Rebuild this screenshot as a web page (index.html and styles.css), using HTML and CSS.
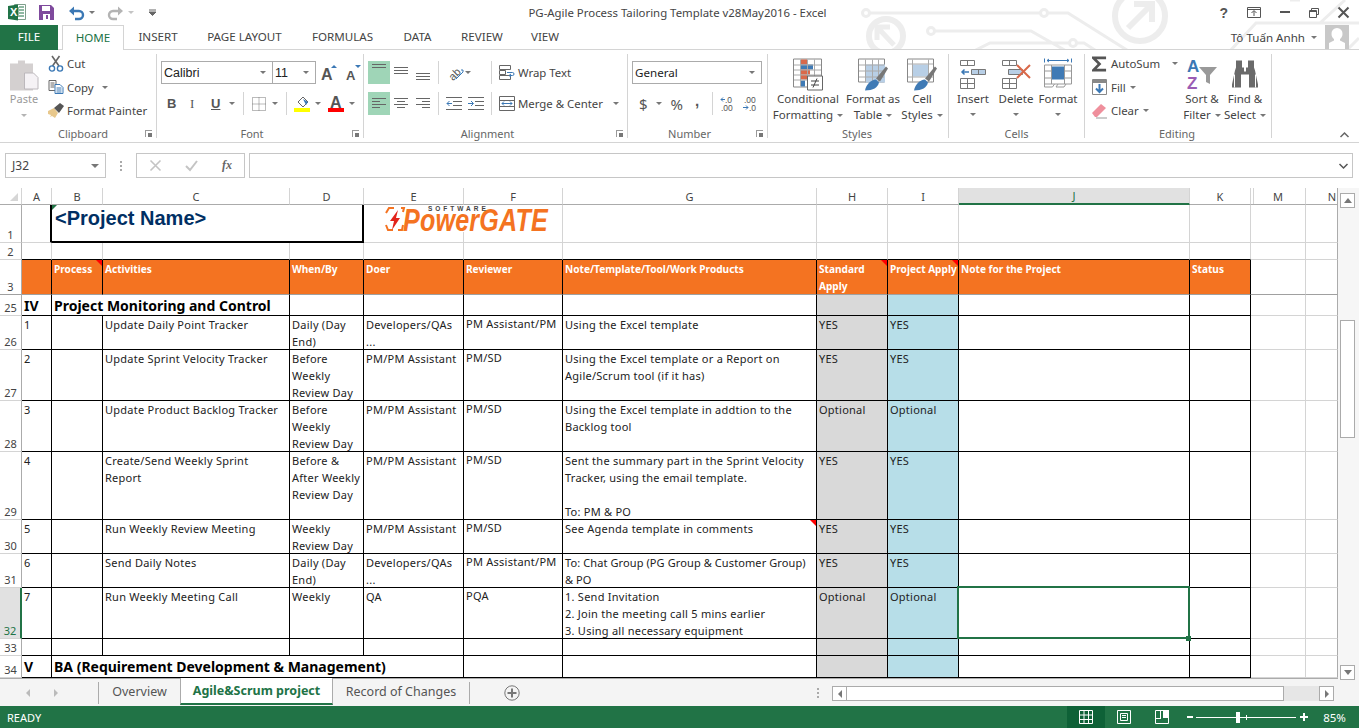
FILE: index.html
```html
<!DOCTYPE html>
<html lang="en">
<head>
<meta charset="utf-8">
<title>PG-Agile Process Tailoring Template v28May2016 - Excel</title>
<link rel="stylesheet" href="styles.css">
</head>
<body>
<div class="app">
<header class="head">
  <svg class="watermark" width="519" height="50" viewBox="0 0 519 50" fill="none" stroke="#ededed" stroke-width="3">
    <circle cx="26" cy="13" r="3.5"/><path d="M30 13H200"/><circle cx="204" cy="13" r="3.5"/><path d="M208 13H228L290 52"/>
    <circle cx="300" cy="16" r="25" stroke-width="6"/><path d="M288 28L311 5M294 4H312V22" stroke-width="6"/>
    <circle cx="46" cy="36" r="17" stroke-width="6"/><path d="M54 45L38 28M37 40V27H50" stroke-width="5"/>
    <circle cx="91" cy="31" r="3.5"/><path d="M95 31H191L228 52M132 52L150 43H229"/><circle cx="233" cy="43" r="3.5"/><path d="M237 43H244L258 52"/>
    <path d="M389 52L416 23H519M480 23L505 0M505 52L519 38M450 0L460 0"/>
  </svg>
  <div class="title-row">
    <div class="qat">
      <svg width="18" height="17" viewBox="0 0 18 17"><path fill="#fff" stroke="#7f9f8c" d="M6.5.5h11v15h-11z"/><path stroke="#217346" d="M11 3h5M11 6h5M11 9h5M11 12h5M10 3v10" fill="none"/><path fill="#217346" d="M0 2l10-1.500v16L0 15z"/><text x="2" y="12" class="xl">X</text></svg>
      <svg class="m12" width="15" height="15" viewBox="0 0 15 15"><path fill="#7f4a9d" d="M0 0h12l3 3v12H0z"/><path fill="#fff" d="M3 1h8v5H3zM4 9h7v6H4z"/><path fill="#7f4a9d" d="M7 10h2v4H7z"/></svg>
      <svg class="m14" width="15" height="14" viewBox="0 0 15 14" fill="none"><path d="M3 5h7a4 4 0 0 1 0 8H6" stroke="#3b78b5" stroke-width="2.400"/><path d="M0 5l5-4.500v9z" fill="#3b78b5"/></svg>
      <i class="caret m5"></i>
      <svg class="m13" width="15" height="14" viewBox="0 0 15 14" fill="none"><path d="M12 5H5a4 4 0 0 0 0 8h4" stroke="#b4b4b4" stroke-width="2.400"/><path d="M15 5l-5-4.500v9z" fill="#b4b4b4"/></svg>
      <i class="caret m5 caret-off"></i>
      <svg class="m15" width="7" height="7" viewBox="0 0 7 7"><path d="M0 1h7M0 3h7l-3.500 3.500z" stroke="#666" stroke-width="1" fill="#666"/></svg>
    </div>
    <div class="doc-title">PG-Agile Process Tailoring Template v28May2016 - Excel</div>
    <div class="win">
      <span class="help">?</span>
      <svg width="14" height="11" viewBox="0 0 14 11" fill="none" stroke="#555"><path d="M.5.500h13v10H.5zM1 2.500h12M7 9V4M4.500 6L7 3.500 9.500 6"/></svg>
      <svg width="10" height="3" viewBox="0 0 10 3"><path d="M0 1h10" stroke="#555" stroke-width="2"/></svg>
      <svg width="10" height="10" viewBox="0 0 10 10" fill="none" stroke="#555"><path d="M2.500 2.500V.5h7v6H7.500M.5 2.500h7v7h-7zM.5 3.500h7" /></svg>
      <svg width="11" height="11" viewBox="0 0 11 11" fill="none" stroke="#555" stroke-width="2"><path d="M.5.500l10 10M10.500.500l-10 10"/></svg>
    </div>
  </div>
  <nav class="tab-row">
    <a class="file">FILE</a>
    <a class="tab on">HOME</a>
    <a class="tab t-ins">INSERT</a>
    <a class="tab t-pl">PAGE LAYOUT</a>
    <a class="tab t-fo">FORMULAS</a>
    <a class="tab t-da">DATA</a>
    <a class="tab t-re">REVIEW</a>
    <a class="tab t-vi">VIEW</a>
    <div class="user">
      <span>Tô Tuấn Anhh</span><i class="caret"></i>
      <svg class="avatar" width="24" height="24" viewBox="0 0 24 24"><path fill="#c8c8c8" d="M0 0h24v24H0z"/><path fill="#fff" d="M12 3a5.500 5.500 0 0 1 5.500 6c0 2.500-1.200 4-2.500 5v1.500l5 2.500v6H4v-6l5-2.500V14c-1.300-1-2.500-2.500-2.500-5A5.500 5.500 0 0 1 12 3z"/></svg>
    </div>
  </nav>
</header>

<section class="ribbon">
  <div class="group g-clip">
    <div class="body row">
      <div class="big paste">
        <svg class="big-ic" width="30" height="32" viewBox="0 0 30 32"><path fill="#d4d0d0" d="M1 5h8V2h7v3h8v27H1z"/><path fill="#f5f2f5" stroke="#bcb8bc" d="M15.500 14.500h9l4.500 4.500v11.500H15.500z"/></svg>
        <span class="off">Paste</span>
        <i class="caret off-c"></i>
      </div>
      <div class="small-col">
        <div class="small"><svg class="sic" width="15" height="16" viewBox="0 0 15 16" fill="none"><path d="M3.500 0l7 10M11 0L4 10" stroke="#666" stroke-width="1.600"/><circle cx="3.500" cy="12.500" r="2.600" stroke="#3b78b5" stroke-width="1.400"/><circle cx="11.500" cy="12.500" r="2.600" stroke="#3b78b5" stroke-width="1.400"/></svg><span>Cut</span></div>
        <div class="small"><svg class="sic" width="15" height="14" viewBox="0 0 15 14" fill="#fff" stroke="#666"><path d="M.5.500h7v10h-7zM2 3h4M2 5h4M2 7h4"/><path stroke="#3b78b5" d="M6.500 4.500h5l3 3v6h-8zM8 8h5M8 10h5M8 12h5"/></svg><span>Copy</span><i class="caret ml8"></i></div>
        <div class="small"><svg class="sic" width="16" height="15" viewBox="0 0 16 15"><path fill="#e8c88c" d="M0 8l6-3 4 5-3 5-3-2-2 1 1-2-3-1z"/><path fill="#555" d="M6 5l6-5 4 3-5 7z"/></svg><span>Format Painter</span></div>
      </div>
    </div>
    <div class="label">Clipboard<i class="launch"></i></div>
  </div>

  <div class="group g-font">
    <div class="body col">
      <div class="r1">
        <div class="select font-sel"><span class="calibri">Calibri</span><i class="caret"></i></div>
        <div class="select size-sel"><span class="calibri">11</span><i class="caret"></i></div>
        <svg class="ml5" width="16" height="16" viewBox="0 0 16 16"><text x="0" y="15" class="glyph-a big-a">A</text><path d="M10 3l3-3 3 3z" fill="#3b78b5"/></svg>
        <svg class="ml8" width="16" height="16" viewBox="0 0 16 16"><text x="1" y="15" class="glyph-a">A</text><path d="M10 0h6l-3 3z" fill="#3b78b5"/></svg>
      </div>
      <div class="r2">
        <b class="fmt ml6">B</b><em class="fmt ml13">I</em><u class="fmt ml11">U</u><i class="caret ml8"></i>
        <i class="vsep ml8"></i>
        <svg class="ml8" width="14" height="14" viewBox="0 0 14 14" fill="none" stroke="#777" stroke-dasharray="1 1"><path d="M.5.500h13v13H.5zM.5 7h13M7 .5v13"/></svg>
        <i class="caret ml6"></i>
        <i class="vsep ml8"></i>
        <svg class="ml7" width="17" height="17" viewBox="0 0 17 17"><path d="M4 7l5-5 5 5-5 5z" fill="#fff" stroke="#666"/><path d="M9 4l5 3-2 3z" fill="#3b78b5"/><path d="M0 13h16v4H0z" fill="#ffff00"/></svg>
        <i class="caret ml4"></i>
        <svg class="ml7" width="17" height="17" viewBox="0 0 17 17"><text x="2" y="13" class="glyph-a big-a">A</text><path d="M0 13h16v4H0z" fill="#ff0000"/></svg>
        <i class="caret ml4"></i>
      </div>
    </div>
    <div class="label">Font<i class="launch"></i></div>
  </div>

  <div class="group g-align">
    <div class="body col">
      <div class="r1">
        <svg class="al on" width="22" height="23" viewBox="0 0 22 23" stroke="#666"><path d="M4 3.500h14M4 6.500h14"/></svg>
        <svg class="al" width="22" height="23" viewBox="0 0 22 23" stroke="#666"><path d="M4 6.500h14M4 9.500h14M4 12.500h14"/></svg>
        <svg class="al" width="22" height="23" viewBox="0 0 22 23" stroke="#666"><path d="M4 12.500h14M4 15.500h14M4 18.500h14"/></svg>
        <i class="vsep ml4"></i>
        <svg class="ml8" width="17" height="17" viewBox="0 0 17 17"><text x="0" y="13" class="ori" transform="rotate(-45 8 8)">ab</text><path d="M9 15L16 8M14 6h2v2" stroke="#3b78b5" fill="none"/></svg>
        <i class="caret ml1"></i>
        <i class="vsep ml20"></i>
        <div class="small wrapbtn"><svg class="sic2" width="16" height="15" viewBox="0 0 16 15" fill="none" stroke="#666"><path d="M.5.500h11v4H.5zM.5 5.500h6v4h-6zM.5 10.500h11v4H.5z"/><path d="M8 7.500h5.500a1.500 1.500 0 0 1 0 3H11M12 9l-2 1.500 2 1.500" stroke="#3b78b5"/></svg><span>Wrap Text</span></div>
      </div>
      <div class="r2">
        <svg class="al on" width="22" height="23" viewBox="0 0 22 23" stroke="#666"><path d="M4 6.500h14M4 9.500h8M4 12.500h14M4 15.500h8"/></svg>
        <svg class="al" width="22" height="23" viewBox="0 0 22 23" stroke="#666"><path d="M4 6.500h14M7 9.500h8M4 12.500h14M7 15.500h8"/></svg>
        <svg class="al" width="22" height="23" viewBox="0 0 22 23" stroke="#666"><path d="M4 6.500h14M10 9.500h8M4 12.500h14M10 15.500h8"/></svg>
        <i class="vsep ml4"></i>
        <svg class="ml7" width="16" height="13" viewBox="0 0 16 13" stroke="#666"><path d="M0 .5h16M7 4.500h9M7 8.500h9M0 12.500h16"/><path d="M6 6.500H1M3.500 4L1 6.500 3.500 9" stroke="#3b78b5" fill="none"/></svg>
        <svg class="ml6" width="16" height="13" viewBox="0 0 16 13" stroke="#666"><path d="M0 .5h16M7 4.500h9M7 8.500h9M0 12.500h16"/><path d="M0 6.500h5M3 4l2.500 2.500L3 9" stroke="#3b78b5" fill="none"/></svg>
        <i class="vsep ml7"></i>
        <div class="small wrapbtn"><svg class="sic2" width="16" height="15" viewBox="0 0 16 15" fill="none" stroke="#666"><path d="M.5.500h15v14H.5zM.5 4.500h15M.5 10.500h15"/><path d="M3 7.500h10M5 5.500l-2 2 2 2M11 5.500l2 2-2 2" stroke="#3b78b5"/></svg><span>Merge &amp; Center</span><i class="caret ml10"></i></div>
      </div>
    </div>
    <div class="label">Alignment<i class="launch"></i></div>
  </div>

  <div class="group g-num">
    <div class="body col">
      <div class="r1"><div class="select num-sel"><span>General</span><i class="caret"></i></div></div>
      <div class="r2">
        <span class="dollar">$</span><i class="caret ml8"></i><span class="pct">%</span><span class="comma">,</span>
        <i class="vsep ml13"></i>
        <svg class="ml7" width="15" height="15" viewBox="0 0 15 15"><text x="5" y="7" class="dec">.0</text><text x="1" y="15" class="dec">.00</text><path d="M5 3.500H1M3 1.500l-2 2 2 2" stroke="#3b78b5" fill="none"/></svg>
        <svg class="ml7" width="15" height="15" viewBox="0 0 15 15"><text x="2" y="7" class="dec">.00</text><text x="7" y="15" class="dec">.0</text><path d="M1 11.500h5M4 9.500l2 2-2 2" stroke="#3b78b5" fill="none"/></svg>
      </div>
    </div>
    <div class="label">Number<i class="launch"></i></div>
  </div>

  <div class="group g-styles">
    <div class="body row">
      <div class="big w72">
        <svg class="big-ic" width="30" height="32" viewBox="0 0 30 32"><path fill="#fff" stroke="#888" d="M.5.500h28v28H.5z"/><path fill="#d9694a" d="M8 1h6v5H8zM8 16h6v5H8z"/><path fill="#3f7ab5" d="M8 6h12v5H8zM8 22h4v6H8z"/><path fill="#d9694a" d="M8 11h9v5H8z"/><path stroke="#aaa" fill="none" d="M7.500 1v27M14.500 1v27M21.500 1v27M1 6.500h27M1 11.500h27M1 16.500h27M1 21.500h27"/><path fill="#fff" stroke="#666" d="M14.500 17.500h15v14h-15z"/><path stroke="#444" fill="none" d="M18 22.500h8M18 26.500h8M20 29l4-9"/></svg>
        <span>Conditional</span><span>Formatting<i class="caret ml4 mid"></i></span>
      </div>
      <div class="big w58">
        <svg class="big-ic" width="30" height="32" viewBox="0 0 30 32"><path fill="#fff" stroke="#888" d="M.5.500h26v23H.5z"/><path fill="#b8cfe6" d="M7 6h20v18H7z"/><path stroke="#aaa" fill="none" d="M7.500 1v23M14.500 1v23M20.500 1v23M1 6.500h25M1 12.500h25M1 18.500h25"/><path fill="#777" d="M18 20L28 8l2 2-8 13z"/><path fill="#3f7ab5" d="M7 32c1-6 6-11 11-11l3 3c-1 5-6 8-14 8z"/></svg>
        <span>Format as</span><span>Table<i class="caret ml4 mid"></i></span>
      </div>
      <div class="big w40">
        <svg class="big-ic" width="30" height="32" viewBox="0 0 30 32"><path fill="#fff" stroke="#888" d="M.5.500h26v23H.5z"/><path fill="#b8cfe6" d="M6 6h15v12H6z"/><path stroke="#aaa" fill="none" d="M5.500 1v23M21.500 1v23M1 5.500h25M1 18.500h25"/><path fill="#777" d="M18 20L28 8l2 2-8 13z"/><path fill="#3f7ab5" d="M7 32c1-6 6-11 11-11l3 3c-1 5-6 8-14 8z"/></svg>
        <span>Cell</span><span>Styles<i class="caret ml4 mid"></i></span>
      </div>
    </div>
    <div class="label">Styles</div>
  </div>

  <div class="group g-cells">
    <div class="body row">
      <div class="big w48">
        <svg class="big-ic" width="28" height="29" viewBox="0 0 28 29" fill="none" stroke="#777"><path d="M1.500.500h14v5h-14zM8.500.500v5M1.500 18.500h14v10h-14zM8.500 18.500v10M1.500 23.500h14"/><path d="M12.500 9.500h14v5h-14zM19.500 9.500v5" fill="#b8cfe6"/><path d="M10 12H3M5.500 9.500L3 12l2.500 2.500" stroke="#3b78b5" stroke-width="1.500"/></svg>
        <span>Insert</span><i class="caret cc"></i>
      </div>
      <div class="big w38">
        <svg class="big-ic" width="30" height="29" viewBox="0 0 30 29" fill="none" stroke="#777"><path d="M1.500.500h14v5h-14zM8.500.500v5M1.500 18.500h14v10h-14zM8.500 18.500v10M1.500 23.500h14"/><path d="M7.500 9.500h14v5h-14z" fill="#b8cfe6"/><path d="M16 5l13 13M29 5L16 18" stroke="#d9694a" stroke-width="2"/></svg>
        <span>Delete</span><i class="caret cc"></i>
      </div>
      <div class="big w46">
        <svg class="big-ic" width="28" height="32" viewBox="0 0 28 32" fill="none" stroke="#999"><path d="M.5 6.500h27v19H.5zM7.500 6.500v19M20.500 6.500v19M.5 12.500h27M.5 19.500h27"/><path d="M8 7h12v13H8z" fill="#3f7ab5" stroke="none" transform="translate(0 1)"/><path d="M.5 0v4M27.500 0v4M3 2h22M5 .5L3 2l2 1.500M23 .5L25 2l-2 1.500" stroke="#3b78b5"/><path d="M.5 25.500v3h8l2-3M14 25.500l-2 3h8l2-3"/></svg>
        <span>Format</span><i class="caret cc"></i>
      </div>
    </div>
    <div class="label">Cells</div>
  </div>

  <div class="group g-edit">
    <div class="body row">
      <div class="small-col edit-col">
        <div class="small"><svg class="sic3" width="16" height="16" viewBox="0 0 16 16"><path fill="#555" d="M0 0h15v3H5l5 5-5 5h10v3H0v-2l6-6-6-6z"/></svg><span>AutoSum</span><i class="caret ml12"></i></div>
        <div class="small"><svg class="sic3" width="15" height="16" viewBox="0 0 15 16" fill="none"><path d="M.5.500h14v15H.5z" stroke="#888" fill="#fff"/><path d="M1 1h13v3H1z" fill="#888"/><path d="M7.500 5v8M4 9.500l3.500 3.500L11 9.500" stroke="#3b78b5" stroke-width="2"/></svg><span>Fill</span><i class="caret ml4 mid"></i></div>
        <div class="small"><svg class="sic3" width="15" height="15" viewBox="0 0 15 15"><path d="M0 10l9-9 5 4-9 9H3z" fill="#ef8f9c"/><path d="M4 15h11" stroke="#999"/></svg><span>Clear</span><i class="caret ml4 mid"></i></div>
      </div>
      <div class="big w44">
        <svg class="big-ic" width="32" height="31" viewBox="0 0 32 31"><text x="1" y="13" class="az blue">A</text><text x="1" y="30" class="az purple">Z</text><path d="M13 8h18l-7 8v9l-4-2v-7z" fill="#999"/></svg>
        <span>Sort &amp;</span><span>Filter<i class="caret ml4 mid"></i></span>
      </div>
      <div class="big w42">
        <svg class="big-ic" width="26" height="28" viewBox="0 0 26 28"><path fill="#6a6a6a" d="M4 0h6v7h2v4h2V7h2V0h6v7l1 3 3 14v3h-9V14h-8v13H0v-3L3 10l1-3z"/><path stroke="#fff" d="M2.500 14v13M23.500 14v13"/></svg>
        <span>Find &amp;</span><span>Select<i class="caret ml4 mid"></i></span>
      </div>
    </div>
    <div class="label">Editing</div>
  </div>
  <svg class="collapse" width="9" height="6" viewBox="0 0 9 6" fill="none" stroke="#666" stroke-width="1.500"><path d="M.5 5l4-4 4 4"/></svg>
</section>

<section class="formula">
  <div class="namebox"><span>J32</span><i class="caret dark"></i></div>
  <div class="dots"><i></i><i></i><i></i></div>
  <div class="fbtns">
    <svg width="11" height="11" viewBox="0 0 11 11" stroke="#c4c4c4" stroke-width="1.600"><path d="M.5.500l10 10M10.500.500l-10 10"/></svg>
    <svg width="13" height="11" viewBox="0 0 13 11" fill="none" stroke="#c4c4c4" stroke-width="2"><path d="M1 6l4 4 7-9"/></svg>
    <span class="fx">fx</span>
  </div>
  <div class="finput"><svg width="9" height="6" viewBox="0 0 9 6" fill="none" stroke="#555" stroke-width="1.500"><path d="M.5 1l4 4 4-4"/></svg></div>
</section>

<section class="sheet">
  <table class="grid">
    <colgroup><col class="w-rh"><col class="w-a"><col class="w-b"><col class="w-c"><col class="w-d"><col class="w-e"><col class="w-f"><col class="w-g"><col class="w-h"><col class="w-i"><col class="w-j"><col class="w-k"><col class="w-m"><col class="w-n"></colgroup>
    <thead>
      <tr class="hh"><th class="corner"></th><th>A</th><th>B</th><th>C</th><th>D</th><th>E</th><th>F</th><th>G</th><th>H</th><th>I</th><th class="sel">J</th><th>K</th><th class="after-hidden">M</th><th class="clip-n">N</th></tr>
    </thead>
    <tbody>
      <tr class="h38 plain"><td class="rn">1</td><td class="box-left"></td><td colspan="3" class="pname"><i class="note-green"></i>&lt;Project Name&gt;</td><td class="logo">
        <svg width="165" height="27" viewBox="0 0 165 27"><path d="M9 3H4L1 8M1 20l2 5h5M16 3h3l-1 4M18 20l-1 5h-4" fill="none" stroke="#f47321" stroke-width="2"/><path d="M13 5L5 16h4l-2 9 8-12h-4z" fill="#e2231a"/><text x="18" y="26" class="pg" textLength="145" lengthAdjust="spacingAndGlyphs">PowerGATE</text><text x="43" y="6" class="sw" textLength="58">SOFTWARE</text></svg>
      </td><td></td><td></td><td></td><td></td><td></td><td></td><td></td><td></td></tr>
      <tr class="h17 plain blk-b"><td class="rn">2</td><td></td><td></td><td></td><td></td><td></td><td></td><td></td><td></td><td></td><td></td><td></td><td class="free"></td><td class="free"></td></tr>
      <tr class="h35 hdr"><td class="rn">3</td><td></td><td><i class="note"></i>Process</td><td>Activities</td><td>When/By</td><td>Doer</td><td>Reviewer</td><td>Note/Template/Tool/Work Products</td><td><i class="note"></i>Standard<br>Apply</td><td><i class="note"></i>Project Apply</td><td>Note for the Project</td><td>Status</td><td class="free"></td><td class="free"></td></tr>
      <tr class="h21 sect"><td class="rn">25</td><td>IV</td><td colspan="2">Project Monitoring and Control</td><td></td><td></td><td></td><td></td><td class="gray"></td><td class="blue"></td><td></td><td></td><td class="free"></td><td class="free"></td></tr>
      <tr class="h34"><td class="rn">26</td><td>1</td><td></td><td>Update Daily Point Tracker</td><td>Daily (Day<br>End)</td><td>Developers/QAs<br>...</td><td class="up">PM Assistant/PM</td><td>Using the Excel template</td><td class="gray">YES</td><td class="blue">YES</td><td></td><td></td><td class="free"></td><td class="free"></td></tr>
      <tr class="h51"><td class="rn">27</td><td>2</td><td></td><td>Update Sprint Velocity Tracker</td><td>Before<br>Weekly<br>Review Day</td><td>PM/PM Assistant</td><td class="up">PM/SD</td><td>Using the Excel template or a Report on<br>Agile/Scrum tool (if it has)</td><td class="gray">YES</td><td class="blue">YES</td><td></td><td></td><td class="free"></td><td class="free"></td></tr>
      <tr class="h51"><td class="rn">28</td><td>3</td><td></td><td>Update Product Backlog Tracker</td><td>Before<br>Weekly<br>Review Day</td><td>PM/PM Assistant</td><td class="up">PM/SD</td><td>Using the Excel template in addtion to the<br>Backlog tool</td><td class="gray">Optional</td><td class="blue">Optional</td><td></td><td></td><td class="free"></td><td class="free"></td></tr>
      <tr class="h68"><td class="rn">29</td><td>4</td><td></td><td>Create/Send Weekly Sprint<br>Report</td><td>Before &amp;<br>After Weekly<br>Review Day</td><td>PM/PM Assistant</td><td class="up">PM/SD</td><td>Sent the summary part in the Sprint Velocity<br>Tracker, using the email template.<br><br>To: PM &amp; PO</td><td class="gray">YES</td><td class="blue">YES</td><td></td><td></td><td class="free"></td><td class="free"></td></tr>
      <tr class="h34"><td class="rn">30</td><td>5</td><td></td><td>Run Weekly Review Meeting</td><td>Weekly<br>Review Day</td><td>PM/PM Assistant</td><td class="up">PM/SD</td><td><i class="note"></i>See Agenda template in comments</td><td class="gray">YES</td><td class="blue">YES</td><td></td><td></td><td class="free"></td><td class="free"></td></tr>
      <tr class="h34"><td class="rn">31</td><td>6</td><td></td><td>Send Daily Notes</td><td>Daily (Day<br>End)</td><td>Developers/QAs<br>...</td><td class="up">PM Assistant/PM</td><td class="tight">To: Chat Group (PG Group &amp; Customer Group)<br>&amp; PO</td><td class="gray">YES</td><td class="blue">YES</td><td></td><td></td><td class="free"></td><td class="free"></td></tr>
      <tr class="h51"><td class="rn rsel">32</td><td>7</td><td></td><td>Run Weekly Meeting Call</td><td>Weekly</td><td>QA</td><td class="up">PQA</td><td>1. Send Invitation<br>2. Join the meeting call 5 mins earlier<br>3. Using all necessary equipment</td><td class="gray">Optional</td><td class="blue">Optional</td><td class="active"><i class="selbox"></i><i class="handle"></i></td><td></td><td class="free"></td><td class="free"></td></tr>
      <tr class="h17"><td class="rn">33</td><td></td><td></td><td></td><td></td><td></td><td></td><td></td><td class="gray"></td><td class="blue"></td><td></td><td></td><td class="free"></td><td class="free"></td></tr>
      <tr class="h22 sect"><td class="rn">34</td><td>V</td><td colspan="4">BA (Requirement Development &amp; Management)</td><td></td><td></td><td class="gray"></td><td class="blue"></td><td></td><td></td><td class="free"></td><td class="free"></td></tr>
    </tbody>
  </table>
  <aside class="vscroll">
    <div class="sbtn"><i class="tri-up"></i></div>
    <div class="vtrack"><div class="vthumb"></div></div>
    <div class="sbtn"><i class="tri-down"></i></div>
  </aside>
</section>

<section class="sheetbar">
  <div class="nav-arrows"><i class="tri-l"></i><i class="tri-r"></i></div>
  <div class="sheets">
    <a class="sheet-tab w-ov">Overview</a>
    <a class="sheet-tab on">Agile&amp;Scrum project</a>
    <a class="sheet-tab w-rc">Record of Changes</a>
  </div>
  <svg class="plus" width="16" height="16" viewBox="0 0 16 16" fill="none" stroke="#777"><circle cx="8" cy="8" r="7.200"/><path d="M8 3.500v9M3.500 8h9" stroke-width="2"/></svg>
  <div class="dots sb-dots"><i></i><i></i><i></i></div>
  <div class="hscroll">
    <div class="hbtn"><i class="tri-l dk"></i></div>
    <div class="hthumb"></div>
    <div class="htrack"></div>
    <div class="hbtn"><i class="tri-r dk"></i></div>
  </div>
</section>

<footer class="status">
  <span>READY</span>
  <div class="views">
    <div class="view on"><svg width="14" height="14" viewBox="0 0 14 14" fill="none" stroke="#fff"><path d="M.5.500h13v13H.5zM.5 5h13M.5 9.500h13M5 .5v13M9.500.5v13"/></svg></div>
    <div class="view"><svg width="14" height="14" viewBox="0 0 14 14" fill="none" stroke="#fff"><path d="M.5.500h13v13H.5zM3.500 3.500h7v7h-7zM5 5.500h4M5 7.500h4"/></svg></div>
    <div class="view"><svg width="14" height="14" viewBox="0 0 14 14"><path d="M.5.500h13v13H.5z" fill="none" stroke="#fff"/><path d="M0 8h5V0h1v9H0zM8 0h6v8H8z" fill="#fff"/></svg></div>
  </div>
  <div class="zoom">
    <i class="zm"></i>
    <div class="slider"><i class="knob"></i><i class="tick"></i></div>
    <i class="zp"></i>
  </div>
  <span class="pct-zoom">85%</span>
</footer>
</div>
</body>
</html>
```
FILE: styles.css
```css
* { box-sizing: border-box; }
html, body { margin: 0; padding: 0; background: #fff; }
body { font: 12px "Noto Sans", "Open Sans", sans-serif; color: #444; }
.app { width: 1359px; height: 728px; overflow: hidden; display: flex; flex-direction: column; }
i { display: block; flex: none; }
svg { flex: none; display: block; overflow: visible; }

/* head */
.head { position: relative; height: 50px; }
.watermark { position: absolute; left: 840px; top: 0; overflow: hidden; }
.title-row { position: relative; height: 25px; display: grid; grid-template-columns: 1fr auto 1fr; align-items: center; }
.qat { display: flex; align-items: center; padding-left: 8px; }
.xl { font: bold 11px "Liberation Sans", sans-serif; fill: #fff; }
.m12 { margin-left: 13px; }
.m14 { margin-left: 15px; }
.m13 { margin-left: 13px; }
.m15 { margin-left: 15px; }
.m5 { margin-left: 5px; }
.doc-title { font-size: 11.400px; color: #444; padding-right: 4px; }
.win { display: flex; align-items: center; justify-content: flex-end; gap: 19px; padding-right: 10px; }
.help { font: bold 14px "Liberation Sans", sans-serif; color: #555; margin-right: 0; }
.tab-row { position: relative; height: 25px; display: flex; align-items: stretch; border-bottom: 1px solid #d4d4d4; }
.file { width: 58px; height: 25px; background: #217346; color: #fff; display: flex; align-items: center; justify-content: center; font-size: 11.600px; margin-right: 4px; padding-bottom: 2px; }
.tab { display: flex; align-items: center; justify-content: center; font-size: 11.600px; color: #444; height: 25px; padding-bottom: 2px; }
.t-ins { width: 68px; } .t-pl { width: 105px; } .t-fo { width: 91px; } .t-da { width: 59px; } .t-re { width: 70px; } .t-vi { width: 56px; }
.tab.on { width: 62px; color: #217346; background: #fff; border: 1px solid #d4d4d4; border-bottom: 0; }
.user { margin-left: auto; display: flex; align-items: center; padding-right: 10px; color: #444; gap: 6px; font-size: 11.600px; height: 24px; }
.user .caret { margin-right: 1px; }
.avatar { margin-left: 1px; }

/* carets */
.caret { width: 0; height: 0; border: 3px solid transparent; border-top: 3px solid #777; border-bottom: 0; }
.caret-off { border-top-color: #c4c4c4; }
.caret.dark { border-width: 4px; border-bottom: 0; border-top-color: #777; }
.off-c { border-top-color: #b4b4b4; margin-top: 7px; }
.caret.cc { margin-top: 6px; }
.caret.mid { display: inline-block; vertical-align: middle; }

/* ribbon */
.ribbon { position: relative; height: 93px; padding-top: 4px; display: flex; border-bottom: 1px solid #d4d4d4; }
.group { height: 84px; border-right: 1px solid #d4d4d4; display: flex; flex-direction: column; position: relative; }
.body { height: 72px; }
.row { display: flex; }
.col { display: flex; flex-direction: column; }
.label { position: relative; height: 12px; line-height: 16px; text-align: center; font-size: 11px; color: #666; }
.launch { position: absolute; right: 4px; top: 4px; width: 7px; height: 7px; border-left: 1px solid #999; border-top: 1px solid #999; }
.launch::after { content: ""; position: absolute; right: 0; bottom: 0; width: 4px; height: 4px; background: #777; }
.g-clip { width: 157px; }
.g-font { width: 207px; padding-left: 4px; }
.g-align { width: 264px; padding-left: 4px; }
.g-num { width: 140px; padding-left: 4px; }
.g-styles { width: 181px; padding-left: 4px; }
.g-cells { width: 136px; }
.g-edit { width: 187px; padding-left: 7px; }
.g-clip .label { padding-left: 10px; }
.g-font .label, .g-align .label, .g-num .label { margin-left: -4px; padding-right: 16px; }
.g-styles .label { margin-left: -4px; padding-right: 2px; }
.g-edit .label { margin-left: -7px; padding-right: 2px; }
.big { display: flex; flex-direction: column; align-items: center; line-height: 16px; font-size: 11.500px; color: #444; white-space: nowrap; }
.big-ic { height: 33px; margin-top: 4px; margin-bottom: 0; }
.paste { width: 48px; }
.off { color: #9a9a9a; font-size: 11px; }
.w72 { width: 72px; } .w58 { width: 58px; } .w40 { width: 40px; } .w48 { width: 48px; } .w38 { width: 38px; } .w46 { width: 46px; } .w44 { width: 44px; } .w42 { width: 42px; }
.small-col { display: flex; flex-direction: column; margin-top: -2px; }
.small { display: flex; align-items: center; height: 23.500px; font-size: 11.400px; color: #444; white-space: nowrap; }
.sic { width: 16px; margin-right: 3px; }
.sic2 { margin-right: 3px; }
.sic3 { margin-right: 4px; width: 15px; }
.edit-col { width: 88px; }
.r1 { display: flex; align-items: center; margin-top: 7px; height: 23px; }
.r2 { display: flex; align-items: center; margin-top: 8px; height: 23px; }
.select { height: 23px; border: 1px solid #ababab; display: flex; align-items: center; justify-content: space-between; padding: 0 6px 0 2px; background: #fff; color: #222; }
.font-sel { width: 111px; border-right: 0; }
.size-sel { width: 44px; }
.num-sel { width: 130px; font-size: 11.600px; }
.calibri { font: 12.500px "Liberation Sans", sans-serif; }
.glyph-a { font: bold 13px "Liberation Sans", sans-serif; fill: #555; }
.big-a { font-size: 16px; }
.fmt { font: 13px "Liberation Serif", serif; color: #555; width: 10px; }
b.fmt { font: bold 13px "Liberation Sans", sans-serif; }
u.fmt { font: bold 13px "Liberation Sans", sans-serif; }
.vsep { width: 1px; height: 23px; background: #d4d4d4; }
.ori { font: 11px "Liberation Sans", sans-serif; fill: #555; }
.al.on { background: #9fd5b7; }
.wrapbtn { margin-left: 7px; }
.ml1 { margin-left: 1px; }
.ml4 { margin-left: 4px; }
.ml5 { margin-left: 5px; }
.ml6 { margin-left: 6px; }
.ml7 { margin-left: 7px; }
.ml8 { margin-left: 8px; }
.ml10 { margin-left: 10px; }
.ml11 { margin-left: 11px; }
.ml12 { margin-left: 12px; }
.ml13 { margin-left: 13px; }
.ml20 { margin-left: 20px; }
.dollar { margin-left: 7px; font-size: 15px; color: #555; }
.pct { margin-left: 9px; font-size: 15px; color: #555; }
.comma { margin-left: 12px; font: bold 15px "Liberation Sans", sans-serif; color: #555; margin-top: -6px; }
.dec { font: 8.500px "Liberation Sans", sans-serif; fill: #555; }
.az { font: bold 17px "Liberation Sans", sans-serif; }
.az.blue { fill: #3b78b5; }
.az.purple { fill: #9a5cb4; }
.collapse { position: absolute; right: 10px; top: 82px; }

/* formula */
.formula { height: 45px; padding: 10px 6px 10px 5px; display: flex; align-items: stretch; }
.namebox { width: 101px; border: 1px solid #c6c6c6; display: flex; align-items: center; justify-content: space-between; padding: 0 6px; color: #444; font-size: 12px; }
.dots { width: 30px; display: flex; flex-direction: column; align-items: center; justify-content: center; gap: 2px; }
.dots i { width: 2px; height: 2px; background: #aaa; }
.fbtns { width: 109px; border: 1px solid #c6c6c6; display: flex; align-items: center; justify-content: space-between; padding: 0 12px 0 13px; }
.fx { font: italic bold 12px "Liberation Serif", serif; color: #666; }
.finput { flex: 1; margin-left: 4px; border: 1px solid #c6c6c6; display: flex; align-items: center; justify-content: flex-end; padding-right: 4px; }

/* sheet */
.sheet { position: relative; height: 490px; display: flex; }
.grid { table-layout: fixed; width: 1338px; height: 490px; border-collapse: separate; border-spacing: 0; font-family: "Noto Sans", sans-serif; font-size: 11px; color: #222; letter-spacing: .25px; }
.w-rh { width: 22px; } .w-a { width: 30px; } .w-b { width: 51px; } .w-c { width: 187px; } .w-d { width: 74px; } .w-e { width: 100px; } .w-f { width: 99px; } .w-g { width: 254px; } .w-h { width: 71px; } .w-i { width: 71px; } .w-j { width: 231px; } .w-k { width: 61px; } .w-m { width: 55px; } .w-n { width: 32px; }
.hh { height: 17px; }
.hh th { padding: 0; font: 11px "Noto Sans", sans-serif; color: #444; border-right: 1px solid #d4d4d4; border-bottom: 1px solid #ababab; overflow: hidden; letter-spacing: 0; }
.corner { position: relative; }
.corner::after { content: ""; position: absolute; right: 3px; bottom: 3px; border: 4px solid transparent; border-right-color: #d6d6d6; border-bottom-color: #d6d6d6; }
.hh .sel { background: #e1e1e1; border-bottom: 2px solid #217346; color: #217346; }
.hh .after-hidden { box-shadow: inset 2px 0 0 #fff, inset 3px 0 0 #d4d4d4; }
.hh .clip-n { text-align: right; padding-right: 1px; border-right: 1px solid #ababab; }
.h38 { height: 38px; } .h17 { height: 17px; } .h35 { height: 35px; } .h21 { height: 21px; } .h34 { height: 34px; } .h51 { height: 51px; } .h68 { height: 68px; } .h22 { height: 22px; }
td { padding: 0 0 0 2px; vertical-align: top; line-height: 17px; white-space: nowrap; border-right: 1px solid #000; border-bottom: 1px solid #000; overflow: hidden; position: relative; }
td:not(.rn)::after { content: ""; display: block; margin-top: -1px; }
td.rn { padding: 0; text-align: center; vertical-align: bottom; color: #444; border-right: 1px solid #ababab; border-bottom: 1px solid #d4d4d4; line-height: 15px; font-size: 11px; letter-spacing: 0; }
td.rsel { background: #e1e1e1; color: #217346; border-right: 2px solid #217346; }
td.tight { letter-spacing: .1px; }
.plain td { border-right: 1px solid #d4d4d4; border-bottom: 1px solid #d4d4d4; }
.plain td.rn { border-right: 1px solid #ababab; }
.plain td.box-left { border-right: 2px solid #000; }
.blk-b td { border-bottom: 1px solid #000; }
.blk-b td.rn, .blk-b td.free { border-bottom: 1px solid #d4d4d4; }
td.free { border-right: 1px solid #d4d4d4; border-bottom: 1px solid #d4d4d4; }
td:last-child { border-right: 1px solid #ababab; }
.hdr td { background: #f47321; color: #fff; font-weight: 700; font-size: 10.100px; border-bottom: 1px solid #a0a0a0; letter-spacing: 0; padding-top: 1px; }
.hdr td:not(.rn)::after { margin-top: -2px; }
.hdr td.rn { background: #fff; color: #444; font-weight: 400; font-size: 11px; border-bottom: 1px solid #a0a0a0; padding-top: 0; }
.hdr td.free { background: #fff; border-bottom: 1px solid #a0a0a0; }
.sect td { font-weight: 700; font-size: 14px; line-height: 22px; color: #000; letter-spacing: 0; }
.sect td:not(.rn)::after { margin-top: -3px; }
.sect td.rn { font-weight: 400; font-size: 11px; color: #444; line-height: 15px; }
td.up { line-height: 15px; }
td.gray { background: #d9d9d9; }
td.blue { background: #b7dee8; }
.plain td.pname { font: bold 20px "Liberation Sans", sans-serif; letter-spacing: 0; color: #002f63; padding: 0 0 0 3px; line-height: 26px; border-right: 2px solid #000; border-bottom: 2px solid #000; overflow: visible; }
.note { position: absolute; top: 0; right: 0; width: 0; height: 0; border-top: 6px solid #f00; border-left: 6px solid transparent; }
.note-green { position: absolute; top: 0; left: 0; width: 0; height: 0; border-top: 5px solid #217346; border-right: 5px solid transparent; }
.plain td.logo { padding: 0; overflow: visible; z-index: 2; }
.logo svg { margin-left: 21px; background: #fff; overflow: hidden; }
.pg { font: italic bold 32px "Liberation Sans", sans-serif; fill: #f47321; }
.sw { font: bold 6.500px "Liberation Sans", sans-serif; fill: #444; }
td.active { overflow: visible; z-index: 3; }
.selbox { position: absolute; left: -2px; top: -2px; right: -1px; bottom: -1px; border: 2px solid #217346; }
.handle { position: absolute; right: -2px; bottom: -3px; width: 5px; height: 5px; background: #217346; }

/* scrollbars */
.vscroll { width: 21px; display: flex; flex-direction: column; padding: 5px 1px 0 0; background: #f6f6f6; height: 492px; position: relative; z-index: 1; }
.sbtn { height: 15px; width: 15px; margin-left: 2px; border: 1px solid #ababab; background: #fff; display: flex; align-items: center; justify-content: center; flex: none; }
.vtrack { flex: 1; padding-top: 112px; padding-left: 2px; }
.vthumb { width: 15px; height: 118px; background: #fff; border: 1px solid #ababab; }
.tri-up { border: 4px solid transparent; border-bottom: 5px solid #777; border-top: 0; }
.tri-down { border: 4px solid transparent; border-top: 5px solid #777; border-bottom: 0; }

/* sheet bar */
.sheetbar { height: 28px; background: #f4f4f4; border-top: 1px solid #ababab; display: flex; align-items: flex-start; position: relative; }
.nav-arrows { width: 99px; height: 22px; margin-top: 3px; padding-left: 26px; display: flex; align-items: center; gap: 24px; border-right: 1px solid #ababab; }
.tri-l { border: 4px solid transparent; border-right: 4px solid #bbb; border-left: 0; }
.tri-r { border: 4px solid transparent; border-left: 4px solid #bbb; border-right: 0; }
.tri-l.dk { border-right-color: #777; }
.tri-r.dk { border-left-color: #777; }
.sheets { display: flex; }
.sheet-tab { height: 25px; display: flex; align-items: center; justify-content: center; font-size: 12.500px; color: #555; padding-bottom: 3px; }
.w-ov { width: 81px; height: 22px; margin-top: 3px; }
.w-rc { width: 137px; border-right: 1px solid #ababab; height: 22px; margin-top: 3px; }
.sheet-tab.on { width: 153px; background: #fff; color: #217346; font-weight: 700; border: 1px solid #ababab; border-top: 0; border-bottom: 2px solid #217346; margin-top: -1px; height: 27px; padding-bottom: 0; }
.plus { margin: 6px 0 0 34px; }
.sb-dots { width: 16px; height: 18px; margin: 5px 0 0 290px; }
.hscroll { margin: 7px 0 0 6px; width: 502px; height: 15px; display: flex; }
.hbtn { width: 15px; height: 15px; border: 1px solid #ababab; background: #fff; display: flex; align-items: center; justify-content: center; flex: none; }
.hthumb { width: 437px; background: #fff; border: 1px solid #ababab; border-left: 0; flex: none; }
.htrack { flex: 1; background: #e6e6e6; }

/* status */
.status { height: 22px; background: #217346; color: #fff; display: flex; align-items: center; padding-left: 7px; font-size: 11px; position: relative; }
.views { display: flex; margin-left: 1026px; height: 22px; }
.view { width: 38px; display: flex; align-items: center; justify-content: center; }
.view.on { background: #0e6137; }
.zoom { display: flex; align-items: center; margin-left: 6px; }
.zm { width: 6px; height: 2px; background: #fff; }
.slider { position: relative; width: 100px; height: 1px; background: #fff; margin: 0 4px 0 3px; }
.knob { position: absolute; left: 40px; top: -5px; width: 4px; height: 11px; background: #fff; }
.tick { position: absolute; left: 50px; top: -2px; width: 1px; height: 5px; background: #fff; }
.zp { position: relative; width: 8px; height: 2px; background: #fff; }
.zp::after { content: ""; position: absolute; left: 3px; top: -3px; width: 2px; height: 8px; background: #fff; }
.pct-zoom { margin-left: 15px; font-size: 11.500px; }
```
